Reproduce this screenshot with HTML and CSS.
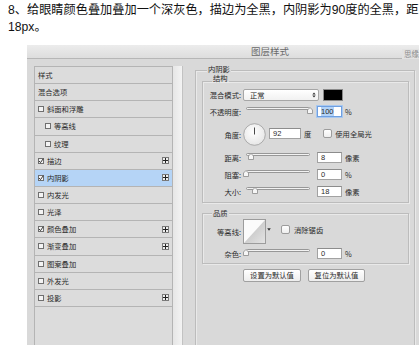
FILE: index.html
```html
<!DOCTYPE html>
<html>
<head>
<meta charset="utf-8">
<link rel="stylesheet" href="styles.css">
</head>
<body>
<p class="intro">8、给眼睛颜色叠加叠加一个深灰色，描边为全黑，内阴影为90度的全黑，距离为8像素，大小为<br>18px。</p>
<div class="dialog">
  <div class="titlebar">图层样式</div>
  <span class="watermark">思缘设计论坛</span>
  <div class="dbody">
    <div class="list">
      <div class="item">样式</div>
      <div class="item">混合选项</div>
      <div class="item"><span class="cb"></span>斜面和浮雕</div>
      <div class="item sub"><span class="cb"></span>等高线</div>
      <div class="item sub"><span class="cb"></span>纹理</div>
      <div class="item"><span class="cb on"><svg width="6" height="6" viewBox="0 0 6 6"><path d="M1 3 L2.5 4.6 L5.2 0.8" fill="none" stroke="#222" stroke-width="0.9"/></svg></span>描边<span class="plus"><svg width="5" height="5" viewBox="0 0 5 5"><path d="M2.5 0 V5 M0 2.5 H5" stroke="#222" stroke-width="1"/></svg></span></div>
      <div class="item sel"><span class="cb on"><svg width="6" height="6" viewBox="0 0 6 6"><path d="M1 3 L2.5 4.6 L5.2 0.8" fill="none" stroke="#222" stroke-width="0.9"/></svg></span>内阴影<span class="plus"><svg width="5" height="5" viewBox="0 0 5 5"><path d="M2.5 0 V5 M0 2.5 H5" stroke="#222" stroke-width="1"/></svg></span></div>
      <div class="item"><span class="cb"></span>内发光</div>
      <div class="item"><span class="cb"></span>光泽</div>
      <div class="item"><span class="cb on"><svg width="6" height="6" viewBox="0 0 6 6"><path d="M1 3 L2.5 4.6 L5.2 0.8" fill="none" stroke="#222" stroke-width="0.9"/></svg></span>颜色叠加<span class="plus"><svg width="5" height="5" viewBox="0 0 5 5"><path d="M2.5 0 V5 M0 2.5 H5" stroke="#222" stroke-width="1"/></svg></span></div>
      <div class="item"><span class="cb"></span>渐变叠加<span class="plus"><svg width="5" height="5" viewBox="0 0 5 5"><path d="M2.5 0 V5 M0 2.5 H5" stroke="#222" stroke-width="1"/></svg></span></div>
      <div class="item"><span class="cb"></span>图案叠加</div>
      <div class="item"><span class="cb"></span>外发光</div>
      <div class="item"><span class="cb"></span>投影<span class="plus"><svg width="5" height="5" viewBox="0 0 5 5"><path d="M2.5 0 V5 M0 2.5 H5" stroke="#222" stroke-width="1"/></svg></span></div>
    </div>
    <div class="gutter"></div>
    <div class="panel">
      <div class="group outer">
        <div class="legend">内阴影</div>
        <div class="group inner">
          <div class="legend l2">结构</div>
          <div class="row r-blend">
            <span class="lbl">混合模式:</span>
            <span class="select">正常<svg class="arrows" width="4" height="6" viewBox="0 0 4 6"><path d="M0.3 2.4 L2 0.6 L3.7 2.4 Z M0.3 3.6 L2 5.4 L3.7 3.6 Z" fill="#333"/></svg></span>
            <span class="swatch"></span>
          </div>
          <div class="row r-op">
            <span class="lbl">不透明度:</span>
            <span class="slider"><span class="track"></span><svg class="thumb" style="left:64px" width="6" height="7" viewBox="0 0 6 7"><path d="M0.5 6.5 V3 L3 0.5 L5.5 3 V6.5 Z" fill="#f6f6f6" stroke="#8a8a8a" stroke-width="0.8"/></svg></span>
            <span class="input focus"><span class="hl">100</span></span>
            <span class="unit">%</span>
          </div>
          <div class="row r-angle">
            <span class="lbl">角度:</span>
            <svg class="dial" width="23" height="23" viewBox="0 0 23 23"><defs><radialGradient id="dg" cx="0.45" cy="0.4" r="0.7"><stop offset="0" stop-color="#ffffff"/><stop offset="1" stop-color="#e2e2e2"/></radialGradient></defs><circle cx="11.5" cy="11.5" r="10.8" fill="url(#dg)" stroke="#9a9a9a" stroke-width="0.8"/><line x1="11.5" y1="11.5" x2="11.5" y2="4.5" stroke="#333" stroke-width="0.9"/></svg>
            <span class="input wide">92</span>
            <span class="unit">度</span>
            <span class="chk"></span>
            <span class="chklbl">使用全局光</span>
          </div>
          <div class="row r-dist">
            <span class="lbl">距离:</span>
            <span class="slider"><span class="track"></span><svg class="thumb" style="left:5px" width="6" height="7" viewBox="0 0 6 7"><path d="M0.5 6.5 V3 L3 0.5 L5.5 3 V6.5 Z" fill="#f6f6f6" stroke="#8a8a8a" stroke-width="0.8"/></svg></span>
            <span class="input">8</span>
            <span class="unit">像素</span>
          </div>
          <div class="row r-choke">
            <span class="lbl">阻塞:</span>
            <span class="slider"><span class="track"></span><svg class="thumb" style="left:0px" width="6" height="7" viewBox="0 0 6 7"><path d="M0.5 6.5 V3 L3 0.5 L5.5 3 V6.5 Z" fill="#f6f6f6" stroke="#8a8a8a" stroke-width="0.8"/></svg></span>
            <span class="input">0</span>
            <span class="unit">%</span>
          </div>
          <div class="row r-size">
            <span class="lbl">大小:</span>
            <span class="slider"><span class="track"></span><svg class="thumb" style="left:9px" width="6" height="7" viewBox="0 0 6 7"><path d="M0.5 6.5 V3 L3 0.5 L5.5 3 V6.5 Z" fill="#f6f6f6" stroke="#8a8a8a" stroke-width="0.8"/></svg></span>
            <span class="input">18</span>
            <span class="unit">像素</span>
          </div>
        </div>
        <div class="group quality">
          <div class="legend l3">品质</div>
          <div class="row r-contour">
            <span class="lbl">等高线:</span>
            <svg class="contour" width="23" height="25" viewBox="0 0 23 25"><defs><linearGradient id="cg" x1="0" y1="0" x2="1" y2="1"><stop offset="0" stop-color="#b8b8b8"/><stop offset="1" stop-color="#e4e4e4"/></linearGradient></defs><rect x="0.5" y="0.5" width="22" height="24" fill="#fbfbfb" stroke="#9c9c9c"/><path d="M1 24 L22 1 L22 24 Z" fill="url(#cg)"/></svg>
            <span class="cdrop"><svg width="4" height="3" viewBox="0 0 4 3"><path d="M0.2 0.3 L3.8 0.3 L2 2.7 Z" fill="#333"/></svg></span>
            <span class="chk c2"></span>
            <span class="chklbl">消除锯齿</span>
          </div>
          <div class="row r-noise">
            <span class="lbl">杂色:</span>
            <span class="slider"><span class="track"></span><svg class="thumb" style="left:0px" width="6" height="7" viewBox="0 0 6 7"><path d="M0.5 6.5 V3 L3 0.5 L5.5 3 V6.5 Z" fill="#f6f6f6" stroke="#8a8a8a" stroke-width="0.8"/></svg></span>
            <span class="input">0</span>
            <span class="unit">%</span>
          </div>
        </div>
        <div class="buttons">
          <span class="btn">设置为默认值</span>
          <span class="btn b2">复位为默认值</span>
        </div>
      </div>
    </div>
  </div>
</div>
</body>
</html>
```

FILE: styles.css
```css
html, body {
  margin: 0;
  padding: 0;
  overflow: hidden;
  background: #ffffff;
}
body {
  width: 419px;
  height: 345px;
  font-family: "Liberation Sans", "Noto Sans CJK SC", sans-serif;
}
.intro {
  margin: 0;
  padding: 2px 0 0 8px;
  font-size: 12.2px;
  line-height: 17px;
  white-space: nowrap;
  color: #111;
}
.dialog {
  position: relative;
  margin: 9px 0 0 27px;
  width: 486px;
  height: 310px;
  background: #d9d9d9;
  font-family: "Noto Sans CJK SC", sans-serif;
  font-size: 7.3px;
  color: #2a2a2a;
}
.titlebar {
  height: 13px;
  line-height: 13px;
  border-bottom: 1px solid #b6b6b6;
  background: linear-gradient(#ececec, #dddddd);
  text-align: center;
  font-size: 9.5px;
  color: #6a6a6a;
}
.watermark {
  position: absolute;
  left: 375px;
  top: 4px;
  padding-left: 2px;
  font-size: 7.5px;
  line-height: 10px;
  color: #8c8c8c;
  background: #e2e2e2;
  white-space: nowrap;
}
.dbody {
  display: flex;
  padding: 7px 0 0 7px;
  height: 290px;
}
.list {
  width: 137px;
  border: 1px solid #b4b4b4;
  border-bottom: none;
  background: #dcdcdc;
}
.item {
  height: 16.15px;
  border-bottom: 1px solid #b4b4b4;
  display: flex;
  align-items: center;
  padding: 0 3px 0 3px;
  line-height: 10px;
}
.item.sub {
  padding-left: 10px;
}
.item.sel {
  background: #b5d4f6;
}
.cb {
  width: 4px;
  height: 4px;
  border: 1px solid #6f6f6f;
  background: #f4f4f4;
  margin-right: 3px;
  position: relative;
  flex: none;
}
.cb svg {
  position: absolute;
  left: -1px;
  top: -1px;
}
.plus {
  margin-left: auto;
  width: 5px;
  height: 5px;
  border: 1px solid #7a7a7a;
  background: #eeeeee;
  display: flex;
  flex: none;
}
.gutter {
  width: 9px;
  border-right: 1px solid #c2c2c2;
  background: linear-gradient(to right, #e6e6e6, #f3f3f3);
}
.panel {
  padding: 4px 0 0 12px;
}
.group {
  border: 1px solid #bcbcbc;
  box-shadow: inset 1px 1px 0 #e9e9e9, 1px 1px 0 #e9e9e9;
}
.outer {
  width: 218px;
  height: 280px;
}
.legend {
  display: table;
  margin: -6px 0 0 11px;
  padding: 0 1px;
  line-height: 8px;
  background: #d9d9d9;
}
.inner {
  margin: 8px 0 0 6px;
  width: 205px;
  padding-bottom: 5px;
}
.l2 {
  margin-top: -8px;
  margin-left: 9px;
}
.quality {
  margin: 10px 0 0 6px;
  width: 205px;
  padding-bottom: 4px;
}
.l3 {
  margin-top: -5px;
  margin-left: 9px;
}
.row {
  display: flex;
  align-items: center;
}
.lbl {
  width: 38px;
  text-align: right;
  margin-right: 2px;
  white-space: nowrap;
  flex: none;
}
.r-blend {
  margin-top: 7px;
  height: 12px;
}
.select {
  width: 66px;
  height: 10px;
  padding: 0 2px 0 6px;
  border: 1px solid #a6a6a6;
  border-radius: 2px;
  background: linear-gradient(#ffffff, #f1f1f1);
  display: flex;
  align-items: center;
  line-height: 10px;
}
.arrows {
  margin-left: auto;
}
.swatch {
  margin-left: 4px;
  width: 18px;
  height: 10px;
  border: 1px solid #8a8a8a;
  background: #000;
}
.r-op {
  margin-top: 5px;
  height: 11px;
}
.slider {
  position: relative;
  width: 67px;
  height: 11px;
  align-self: flex-start;
  flex: none;
}
.track {
  display: block;
  margin: 1px 0 0 3px;
  height: 1px;
  border: 1px solid #979797;
  border-radius: 2px;
  background: #f2f2f2;
}
.thumb {
  position: absolute;
  top: 1px;
}
.input {
  margin-left: 7px;
  width: 20px;
  height: 9px;
  padding: 0 0 0 3px;
  border: 1px solid #a2a2a2;
  border-top-color: #8c8c8c;
  background: #ffffff;
  font-family: "Liberation Sans", sans-serif;
  font-size: 7.5px;
  line-height: 9px;
  flex: none;
}
.input.focus {
  border-color: #6f9fe0;
  box-shadow: 0 0 0 1px #a8c8f0;
}
.hl {
  background: #b3d3f7;
}
.unit {
  margin-left: 3px;
}
.r-angle {
  margin-top: 6px;
  height: 23px;
}
.dial {
  flex: none;
}
.input.wide {
  margin-left: 3px;
  width: 27px;
  margin-top: -2px;
}
.r-angle .unit {
  margin-left: 3px;
  margin-top: -2px;
}
.chk {
  margin-left: 12px;
  width: 7px;
  height: 7px;
  border: 1px solid #9c9c9c;
  border-radius: 2px;
  background: linear-gradient(#ffffff, #eeeeee);
  margin-top: -2px;
  flex: none;
}
.chklbl {
  margin-left: 3px;
  margin-top: -2px;
}
.r-dist {
  margin-top: 6px;
  height: 11px;
}
.r-choke,
.r-size {
  margin-top: 6px;
  height: 11px;
}
.r-contour {
  margin-top: 2px;
  height: 25px;
}
.contour {
  flex: none;
}
.cdrop {
  width: 5px;
  height: 25px;
  display: flex;
  align-items: center;
  justify-content: center;
  margin-top: -4px;
}
.chk.c2 {
  margin-left: 10px;
  margin-top: -4px;
}
.r-contour .chklbl {
  margin-left: 4px;
  margin-top: -4px;
}
.r-noise {
  margin-top: 4px;
  height: 11px;
}
.buttons {
  display: flex;
  margin: 5px 0 0 47px;
  gap: 7px;
}
.btn {
  width: 56px;
  height: 11px;
  line-height: 11px;
  border: 1px solid #a0a0a0;
  border-radius: 2px;
  background: linear-gradient(#ffffff, #ededed);
  text-align: center;
  white-space: nowrap;
}
.btn.b2 {
  width: 55px;
}
```
